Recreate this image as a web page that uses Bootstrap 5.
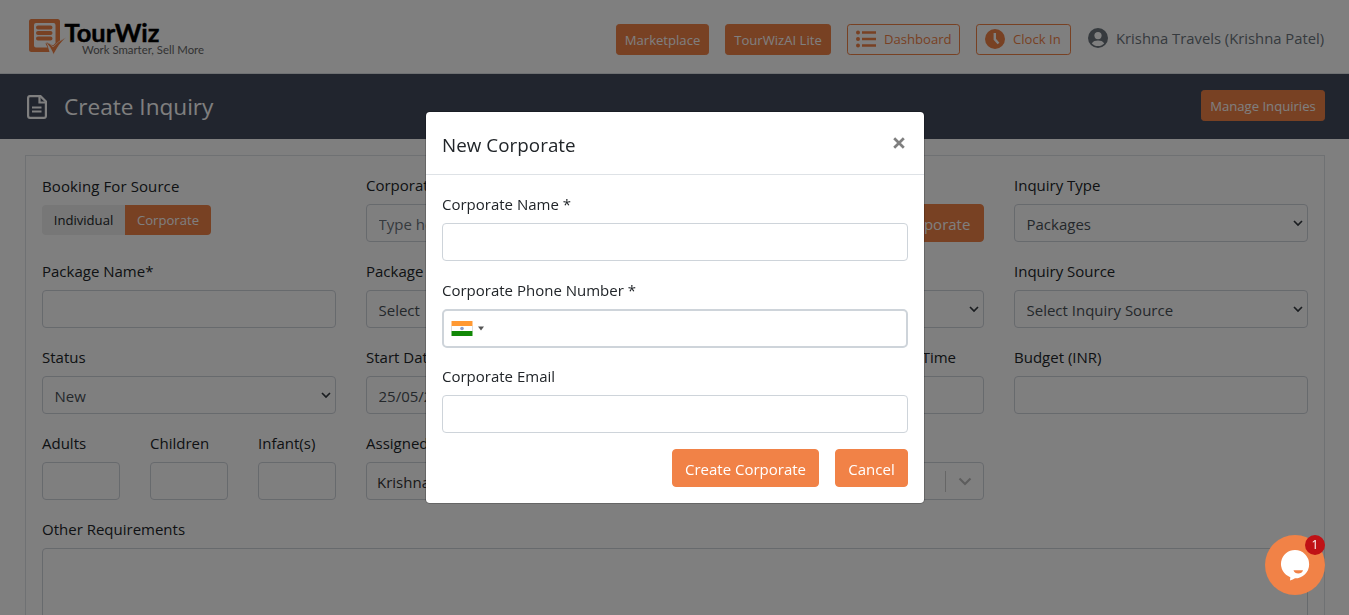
<!DOCTYPE html>
<html lang="en">
<head>
<meta charset="utf-8">
<meta name="viewport" content="width=device-width, initial-scale=1">
<title>Create Inquiry</title>
<link href="https://cdn.jsdelivr.net/npm/bootstrap@5.3.0/dist/css/bootstrap.min.css" rel="stylesheet">
<style>
  :root { --brand: #f18247; }
  body { font-family: "Open Sans", "Noto Sans", sans-serif; font-size: 15px; line-height: 24px; color: #212529; height: 615px; overflow: hidden; background: #fff; }
  .site-header { height: 74px; padding: 0 26px 0 28px; border-bottom: 1px solid #dee2e6; }
  .brand-btns { margin-top: 5px; }
  .btn { --bs-btn-border-radius: 4px; }
  .btn-brand { background: var(--brand); border-color: var(--brand); color: #fff; font-size: 15px; height: 38px; padding: 1px 0 0; line-height: 24px; white-space: nowrap; }
  .btn-line { background: transparent; border-color: var(--brand); color: var(--brand); white-space: nowrap; }
  .btn-short { height: 31px; font-size: 13.1px; line-height: 20px; padding: 1px 0 0; border-radius: 3.2px; }
  .w-market { width: 93px; } .w-lite { width: 106px; } .w-dash { width: 113px; } .w-clock { width: 95px; } .w-manage { width: 124px; }
  .account { color: #6c757d; width: 235px; margin-left: 17px; margin-top: 3px; white-space: nowrap; font-size: 14.8px; }
  .account svg { flex: none; }
  .title-bar { height: 65px; background: #434a5c; padding: 0 24px 0 27px; color: #fff; }
  .title-bar h1 { font-size: 22.6px; line-height: 30px; font-weight: 400; margin: 0 0 0 17px; }
  .title-bar .w-manage { margin-top: -2px; padding-top: 0; }
  .inquiry-card { margin: 16px 24px 0 25px; border: 1px solid #dee2e6; padding: 16px 1px; height: 460px; overflow: hidden; border-bottom: 0; }
  .row { --bs-gutter-x: 30px; }
  .form-row { margin: 0; }
  .field { margin-bottom: 16px; }
  .field > label { display: block; height: 24px; margin-bottom: 8px; padding-top: 1px; white-space: nowrap; }
  .field > label.source-label { padding-top: 2px; letter-spacing: .1px; }
  .field .form-control { height: 38px; font-size: 15px; line-height: 24px; padding: 7px 12px 5px 11.5px; border: 1px solid #ced4da; border-radius: 4px; color: #495057; background-color: #fff; }
  .field select.form-control { appearance: none; background: #fff url("data:image/svg+xml,%3Csvg xmlns='http://www.w3.org/2000/svg' width='10' height='7'%3E%3Cpath d='M1 1l4 4 4-4' fill='none' stroke='%23343a40' stroke-width='1.7'/%3E%3C/svg%3E") no-repeat right 4px center; }
  .field .form-control::placeholder { color: #6c757d; }
  .toggle .btn { height: 30px; margin-top: 1px; font-size: 13.1px; line-height: 20px; padding: 0 0 1px; border: 0; }
  .toggle .individual { width: 83px; background: #eee; color: #212529; }
  .toggle .corporate { width: 86px; background: var(--brand); color: #fff; margin-left: 0 !important; }
  .field .form-control.owner { padding: 5px 11px 3px 10px; color: #333; }
  .owner .bar { width: 1px; height: 21px; background: #ccc; margin: -1px 12px 0 auto; }
  .owner svg { margin-top: -1px; }
  .w-add { width: 130px; }
  .modal-dialog { width: 500px; max-width: none; margin: 111px 0 0 425px; }
  .modal-content { border: 1px solid rgba(0,0,0,.2); border-radius: 4.8px; background-clip: padding-box; }
  .modal-header { height: 63px; padding: 3px 19px 0 16px; border-color: #dee2e6; }
  .modal-title { font-size: 18.8px; line-height: 30px; font-weight: 400; letter-spacing: .05px; }
  .modal-header .close-x { border: 0; background: none; padding: 0; line-height: 0; margin-top: -4px; }
  .modal-body { padding: 16px; }
  .field .form-control.phone { height: 39px; border-width: 2px; padding: 0 7px; margin-bottom: -1px; border-radius: 5px; }
  .phone svg { margin-top: -1px; }
  .w-create { width: 147px; } .w-cancel { width: 73px; }
  .chat { position: fixed; left: 1265px; top: 535px; width: 60px; height: 60px; z-index: 1100; }
  .chat-count { position: absolute; left: 40px; top: 0; width: 20px; height: 20px; border-radius: 50%; background: #c01216; color: #fff; font-size: 12px; line-height: 20px; text-align: center; }
</style>
</head>
<body>
<header class="site-header d-flex align-items-center justify-content-between">
  <svg width="178" height="40" viewBox="0 0 178 40" aria-label="TourWiz">
    <path fill-rule="evenodd" d="M3.500 2h26A2.500 2.500 0 0 1 32 4.500V24l-7 6-6-3.500 2.500 8.500h-18A2.500 2.500 0 0 1 1 32.500v-28A2.500 2.500 0 0 1 3.500 2zM8 6a2 2 0 0 0-2 2v20.500a2 2 0 0 0 2 2h11.500l-2-4 1.500-1 6 3 2.500-2.500V8a2 2 0 0 0-2-2z" fill="#f18247"/>
    <path d="M10 10.500h12.500M10 16h12.500M10 21.500h12.500" stroke="#f18247" stroke-width="4" stroke-linecap="round"/>
    <path d="M17.500 25q4.500 1 7.500 5 5-6 13-9.500-7 6-12.500 17-3-8-8-12.500z" fill="#f18247" stroke="#fff" stroke-width=".6"/>
    <text x="36.500" y="25.300" textLength="95" lengthAdjust="spacingAndGlyphs" font-family="Lato, sans-serif" font-weight="700" font-size="24" fill="#000" stroke="#000" stroke-width=".4">TourWiz</text>
    <text x="54" y="37" textLength="122" lengthAdjust="spacingAndGlyphs" font-family="Lato, sans-serif" font-size="11.500" fill="#666">Work Smarter, Sell More</text>
  </svg>
  <div class="d-flex align-items-center">
    <div class="d-flex gap-3 brand-btns">
      <button class="btn btn-brand btn-short w-market">Marketplace</button>
      <button class="btn btn-brand btn-short w-lite">TourWizAI Lite</button>
      <button class="btn btn-line btn-short w-dash d-flex p-0 ps-2 align-items-center">
        <svg width="20" height="18" viewBox="0 0 20 18" fill="#f18247"><circle cx="2" cy="2.500" r="2"/><circle cx="2" cy="9" r="2"/><circle cx="2" cy="15.500" r="2"/><path d="M6 1.200h14v2.600H6zM6 7.700h14v2.600H6zM6 14.200h14v2.600H6z"/></svg>
        <span class="ms-2">Dashboard</span></button>
      <button class="btn btn-line btn-short w-clock d-flex p-0 ps-2 align-items-center">
        <svg width="20" height="20" viewBox="0 0 20 20"><circle cx="10" cy="10" r="10" fill="#f18247"/><path d="M9.800 4v6.200l3.700 4.300" fill="none" stroke="#fff" stroke-width="2.400"/></svg>
        <span class="ms-2">Clock In</span></button>
    </div>
    <div class="account d-flex align-items-center">
      <svg width="20" height="20" viewBox="0 0 20 20"><circle cx="10" cy="10" r="10" fill="#6c757d"/><circle cx="10" cy="7.600" r="3.600" fill="#fff"/><path d="M3.800 15.400c1.400-2.300 3.600-2.900 6.200-2.900s4.800.6 6.200 2.900c-1.700 1.700-3.800 2.600-6.200 2.600s-4.500-.9-6.200-2.600z" fill="#fff"/></svg>
      <span class="ms-2">Krishna Travels (Krishna Patel)</span>
    </div>
  </div>
</header>
<div class="title-bar d-flex align-items-center">
  <svg width="20" height="24" viewBox="0 0 20 24" fill="none" stroke="#fff" stroke-width="2.200"><path d="M3 1.100h10.500L18.900 6.500V21a2 2 0 0 1-2 1.900H3A2 2 0 0 1 1.100 21V3A2 2 0 0 1 3 1.100z"/><path d="M12.500 1v6.500H19M5 12.500h9.500M5 16.500h9.500"/></svg>
  <h1>Create Inquiry</h1>
  <button class="btn btn-brand btn-short w-manage ms-auto">Manage Inquiries</button>
</div>
<main class="inquiry-card">
  <div class="row form-row">
    <div class="col-3 field"><label class="source-label">Booking For Source</label>
      <div class="btn-group toggle"><button class="btn individual">Individual</button><button class="btn corporate">Corporate</button></div></div>
    <div class="col-6 field"><label>Corporate *</label>
      <div class="d-flex"><input class="form-control rounded-end-0" placeholder="Type here to search"><button class="btn btn-brand rounded-start-0 w-add flex-shrink-0">Add Corporate</button></div></div>
    <div class="col-3 field"><label>Inquiry Type</label><select class="form-control"><option>Packages</option></select></div>

    <div class="col-3 field"><label>Package Name*</label><input class="form-control"></div>
    <div class="col-3 field"><label>Package Type</label><select class="form-control"><option>Select</option></select></div>
    <div class="col-3 field"><label>Destination</label><select class="form-control"><option>Select</option></select></div>
    <div class="col-3 field"><label>Inquiry Source</label><select class="form-control"><option>Select Inquiry Source</option></select></div>

    <div class="col-3 field"><label>Status</label><select class="form-control"><option>New</option></select></div>
    <div class="col-3 field"><label>Start Date</label><input class="form-control" value="25/05/2024"></div>
    <div class="col-3 field"><label class="text-end pe-4 me-1">Followup Time</label><input class="form-control"></div>
    <div class="col-3 field"><label>Budget (INR)</label><input class="form-control"></div>

    <div class="col-1 field"><label>Adults</label><input class="form-control"></div>
    <div class="col-1 field"><label>Children</label><input class="form-control"></div>
    <div class="col-1 field"><label>Infant(s)</label><input class="form-control"></div>
    <div class="col-6 field"><label>Assigned To</label>
      <div class="form-control owner d-flex align-items-center"><span>Krishna Patel</span><span class="bar"></span>
        <svg width="14" height="9" viewBox="0 0 14 9"><path d="M1.500 1.500L7 7l5.500-5.500" fill="none" stroke="#bbb" stroke-width="2.200"/></svg></div></div>
    <div class="col-3"></div>

    <div class="col-12 field"><label>Other Requirements</label><textarea class="form-control h-100" rows="4"></textarea></div>
  </div>
</main>

<div class="modal-backdrop show"></div>
<div class="modal show d-block overflow-hidden" role="dialog">
  <div class="modal-dialog">
    <div class="modal-content">
      <div class="modal-header">
        <h5 class="modal-title">New Corporate</h5>
        <button class="close-x" aria-label="Close"><svg width="12" height="12" viewBox="0 0 12 12"><path d="M1.200 1.200l9.600 9.600M10.800 1.200l-9.600 9.600" stroke="#7f7f7f" stroke-width="2.700"/></svg></button>
      </div>
      <div class="modal-body">
        <div class="field"><label>Corporate Name *</label><input class="form-control"></div>
        <div class="field"><label>Corporate Phone Number *</label>
          <div class="form-control phone d-flex align-items-center">
            <svg width="22" height="15" viewBox="0 0 22 15"><path fill="#fff" d="M0 0h22v15H0z"/><path fill="#ff9933" d="M.5 0h21v5H.5z"/><path fill="#128807" d="M.5 10h21v5H.5z"/><circle cx="11" cy="7.500" r="1.800" fill="#8a9cc9"/><path d="M.5 5v5M21.500 5v5" stroke="#ddd"/></svg>
            <svg class="ms-1" width="8" height="5" viewBox="0 0 8 5"><path d="M1 .5h6L4 4.500z" fill="#555"/></svg>
          </div></div>
        <div class="field"><label>Corporate Email</label><input class="form-control"></div>
        <div class="d-flex justify-content-end gap-3">
          <button class="btn btn-brand w-create">Create Corporate</button>
          <button class="btn btn-brand w-cancel">Cancel</button>
        </div>
      </div>
    </div>
  </div>
</div>

<div class="chat">
  <svg width="60" height="60" viewBox="0 0 60 60"><circle cx="30" cy="30" r="30" fill="#f18247"/><path d="M30 15a14 14 0 0 1 0 28.300q-2 1.200-5 2.200l.3-3.300A14 14 0 0 1 30 15z" fill="#fff"/><path d="M28.500 35.300h9.500q-1 3.200-4.700 3.200t-4.800-3.200z" fill="#f18247"/></svg>
  <span class="chat-count">1</span>
</div>
<script src="https://cdn.jsdelivr.net/npm/bootstrap@5.3.0/dist/js/bootstrap.bundle.min.js"></script>
</body>
</html>
